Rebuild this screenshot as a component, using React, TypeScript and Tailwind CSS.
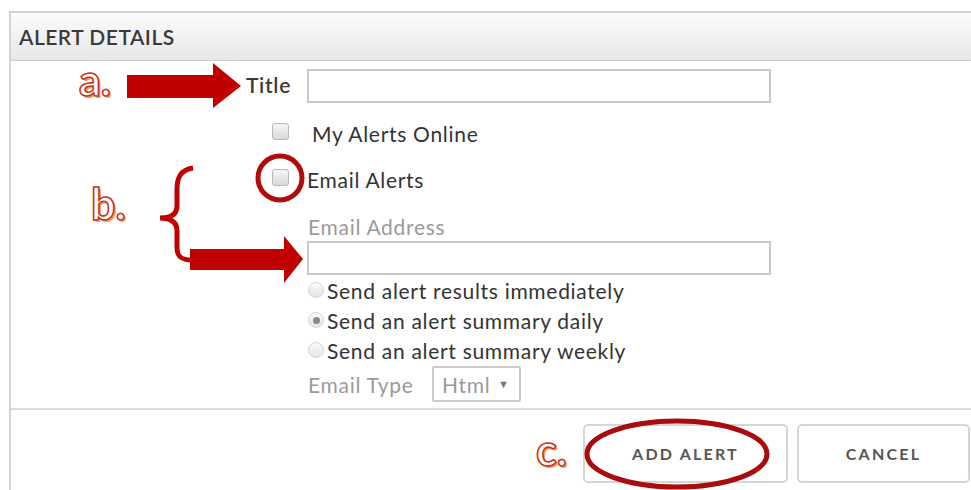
import React from "react";

const label = "text-[21px] leading-none tracking-[0.7px]";

function Checkbox() {
  return (
    <span className="block w-[17px] h-[17px] rounded-[3px] border border-[#b8b8b8] bg-linear-to-b from-[#f6f6f6] to-[#d9d9d9]" />
  );
}

function Radio({ checked = false }: { checked?: boolean }) {
  return (
    <span className="flex items-center justify-center w-[16px] h-[16px] rounded-full border border-[#d6d6d6] bg-linear-to-b from-[#fbfbfb] to-[#e4e4e4]">
      {checked && <span className="w-[7px] h-[7px] rounded-full bg-[#8a8a8a]" />}
    </span>
  );
}

function Marker({ text, className }: { text: string; className: string }) {
  return (
    <span
      className={`absolute font-['Lato',sans-serif] font-bold text-white leading-none [-webkit-text-stroke:1.6px_#c8341c] [text-shadow:2px_2px_0_#f0a060] ${className}`}
    >
      {text}
    </span>
  );
}

export default function App() {
  const frequencies = [
    { text: "Send alert results immediately", checked: false },
    { text: "Send an alert summary daily", checked: true },
    { text: "Send an alert summary weekly", checked: false },
  ];

  return (
    <div className="relative w-[971px] h-[490px] overflow-hidden bg-white font-['Lato',sans-serif] text-[#333]">
      <div className="h-[11px]" />
      <div className="ml-[9px] h-[479px] border-l-2 border-t-2 border-[#d4d4d4]">
        {/* panel header */}
        <div className="h-[48px] flex items-center pl-[8px] bg-linear-to-b from-[#fcfcfc] to-[#e7e7e7] border-b border-[#cfcfcf]">
          <span className="text-[21px] leading-none font-semibold text-[#3a3a3a] tracking-[0.5px]">ALERT DETAILS</span>
        </div>

        {/* form body */}
        <div className="h-[349px] border-b-2 border-[#dcdcdc] flex flex-col">
          <div className="mt-[8px] flex items-center h-[34px]">
            <div className="w-[296px] pr-[16px] text-right">
              <span className={`${label} font-semibold text-[#3a3a3a]`}>Title</span>
            </div>
            <input className="w-[464px] h-[34px] border-2 border-[#c8c8c8] bg-white outline-none" />
          </div>

          <div className="mt-[13px] h-[30px] flex items-center pl-[261px]">
            <Checkbox />
            <span className={`${label} ml-[23px] mt-[5px]`}>My Alerts Online</span>
          </div>

          <div className="mt-[16px] h-[30px] flex items-center pl-[261px]">
            <Checkbox />
            <span className={`${label} ml-[18px] mt-[5px]`}>Email Alerts</span>
          </div>

          <div className="mt-[19px] h-[30px] flex items-center pl-[297px]">
            <span className={`${label} text-[#9a9a9a]`}>Email Address</span>
          </div>
          <div className="pl-[296px]">
            <input className="block w-[464px] h-[34px] border-2 border-[#c8c8c8] bg-white outline-none" />
          </div>

          {frequencies.map((f) => (
            <div key={f.text} className="h-[30px] flex items-center pl-[297px]">
              <Radio checked={f.checked} />
              <span className={`${label} ml-[3px]`}>{f.text}</span>
            </div>
          ))}

          <div className="mt-[1px] h-[36px] flex items-center pl-[297px]">
            <span className={`${label} text-[#9a9a9a] w-[124px]`}>Email Type</span>
            <div className="w-[89px] h-[36px] flex items-center justify-between pl-[8px] pr-[10px] border-2 border-[#cbcbcb] rounded-[2px]">
              <span className={`${label} text-[#9a9a9a]`}>Html</span>
              <span className="text-[11px] text-[#777]">▼</span>
            </div>
          </div>
        </div>

        {/* footer actions */}
        <div className="pt-[14px] flex justify-end gap-[9px] pr-[1px]">
          <button className="w-[205px] h-[59px] rounded-[5px] border-2 border-[#d6d6d6] bg-white text-[16px] font-bold tracking-[2.2px] text-[#555]">
            ADD ALERT
          </button>
          <button className="w-[173px] h-[59px] rounded-[5px] border-2 border-[#d6d6d6] bg-white text-[16px] font-bold tracking-[2.2px] text-[#555]">
            CANCEL
          </button>
        </div>
      </div>

      {/* annotation marks */}
      <svg className="absolute inset-0 pointer-events-none" width="971" height="490" viewBox="0 0 971 490">
        <polygon
          points="127,75 213,75 213,63 241,86 213,108 213,98 127,98"
          fill="#c00000"
        />
        <path
          d="M193,168 C180,170 177,178 177,190 L177,206 C177,214 171,218 160,218 C171,218 177,222 177,231 L177,248 C177,257 182,260 192,260"
          fill="none"
          stroke="#c00000"
          strokeWidth="5"
        />
        <polygon
          points="190,249 284,249 284,236 303,259 284,283 284,270 190,270"
          fill="#c00000"
        />
        <circle cx="280" cy="178" r="22" fill="none" stroke="#b00c0c" strokeWidth="5" />
        <ellipse cx="677" cy="454" rx="90" ry="33" fill="none" stroke="#a80c0c" strokeWidth="5" />
      </svg>

      <Marker text="a." className="left-[79px] top-[58px] text-[43px]" />
      <Marker text="b." className="left-[91px] top-[182px] text-[43px]" />
      <Marker text="c." className="left-[536px] top-[428px] text-[43px]" />
    </div>
  );
}
